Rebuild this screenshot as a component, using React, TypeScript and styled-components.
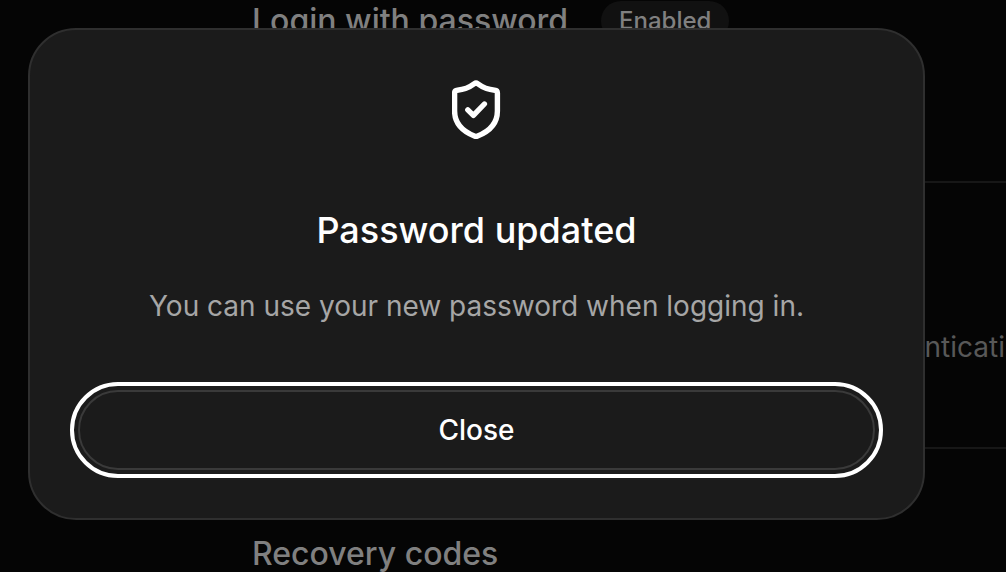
import React from "react";
import styled, { createGlobalStyle } from "styled-components";

const GlobalStyle = createGlobalStyle`
  * { box-sizing: border-box; }
  html, body, #root { height: 100%; }
  body {
    margin: 0;
    overflow: hidden;
    background: #050505;
    color: #ffffff;
    font-family: Inter, "Liberation Sans", sans-serif;
  }
  h2, p { margin: 0; }
`;

const Settings = styled.main`
  display: flex;
  flex-direction: column;
  padding-left: 252px;
  overflow: hidden;
`;

const Section = styled.section<{ $top: number; $bottom: number; $divided?: boolean }>`
  padding: ${({ $top, $bottom }) => `${$top}px 0 ${$bottom}px`};
  border-bottom: ${({ $divided }) => ($divided ? "2px solid #171717" : "0")};
`;

const SectionHeader = styled.div`
  display: flex;
  align-items: center;
  gap: 33px;
  height: 42px;
`;

const SectionTitle = styled.h2`
  color: #808080;
  font-size: 32px;
  font-weight: 500;
  line-height: 40px;
  white-space: nowrap;
`;

const Badge = styled.span`
  padding: 0 18px;
  border-radius: 20px;
  background: #111111;
  color: #808080;
  font-size: 24px;
  font-weight: 500;
  line-height: 40px;
`;

const SectionText = styled.p`
  color: #585858;
  font-size: 28px;
  line-height: 40px;
  white-space: nowrap;
`;

const Overlay = styled.div`
  position: fixed;
  inset: 0;
  padding: 28px 81px 28px 28px;
`;

const Dialog = styled.div`
  display: flex;
  flex-direction: column;
  align-items: center;
  width: 100%;
  padding: 50px 48px 48px;
  border: 2px solid #2f2f2f;
  border-radius: 48px;
  background: #1b1b1b;
  text-align: center;
`;

const DialogTitle = styled.h2`
  margin-top: 68px;
  font-size: 36px;
  font-weight: 500;
  line-height: 44px;
`;

const DialogText = styled.p`
  margin-top: 34px;
  color: #a6a6a6;
  font-size: 28px;
  line-height: 40px;
`;

const CloseButton = styled.button`
  width: 100%;
  height: 80px;
  margin-top: 64px;
  border: 2px solid #3a3a3a;
  border-radius: 40px;
  outline: 4px solid #ffffff;
  outline-offset: 4px;
  background: transparent;
  color: #ffffff;
  font: 500 28px/40px Inter, "Liberation Sans", sans-serif;
  cursor: pointer;
`;

const ShieldCheck = () => (
  <svg
    width="49"
    height="60"
    viewBox="0 0 49 60"
    fill="none"
    stroke="currentColor"
    strokeWidth="5.4"
    strokeLinecap="round"
    strokeLinejoin="round"
    aria-hidden="true"
  >
    <path d="M22.4 3.7Q24 2.5 25.6 3.7C30.5 7.4 36 9.7 42.7 10.2Q45.4 10.4 45.4 13V31C45.4 43.5 37 51.5 25.6 56Q24 56.7 22.4 56C11 51.5 2.6 43.5 2.6 31V13Q2.6 10.4 5.3 10.2C12 9.7 17.5 7.4 22.4 3.7Z" />
    <path d="M15.8 29.8L21.4 35.4L32.4 24" />
  </svg>
);

export default function App() {
  return (
    <>
      <GlobalStyle />
      <Settings>
        <Section $top={0} $bottom={139} $divided>
          <SectionHeader>
            <SectionTitle>Login with password</SectionTitle>
            <Badge>Enabled</Badge>
          </SectionHeader>
        </Section>
        <Section $top={144} $bottom={80} $divided>
          <SectionText>Require any extra step when you sign in with authentication</SectionText>
        </Section>
        <Section $top={84} $bottom={0}>
          <SectionHeader>
            <SectionTitle>Recovery codes</SectionTitle>
          </SectionHeader>
        </Section>
      </Settings>
      <Overlay>
        <Dialog role="dialog" aria-modal="true" aria-labelledby="dialog-title">
          <ShieldCheck />
          <DialogTitle id="dialog-title">Password updated</DialogTitle>
          <DialogText>You can use your new password when logging in.</DialogText>
          <CloseButton type="button">Close</CloseButton>
        </Dialog>
      </Overlay>
    </>
  );
}
